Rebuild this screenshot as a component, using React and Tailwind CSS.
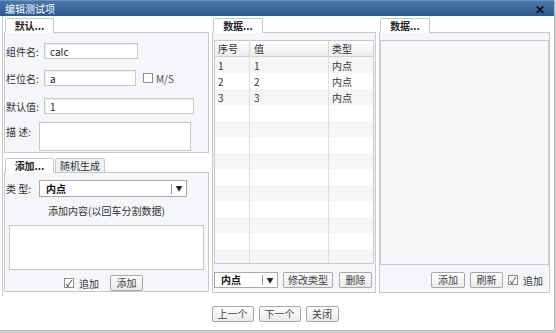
import React from 'react';

const Check = ({ checked }) => (
  <span className="inline-flex items-center justify-center w-[10px] h-[10px] border border-[#8e8e8e] bg-white text-[9px] leading-none text-[#222]">
    {checked ? '✓' : ''}
  </span>
);

const Btn = ({ children, className = '' }) => (
  <button className={`h-[16px] border border-[#a7a7a7] rounded-[2px] bg-gradient-to-b from-white to-[#e9e9e9] text-[10px] leading-none text-[#444] ${className}`}>
    {children}
  </button>
);

const Select = ({ className = '' }) => (
  <div className={`flex items-center bg-white border border-[#a9a9a9] ${className}`}>
    <span className="flex-1 pl-[6px] text-[10px] font-bold text-[#111] leading-none">内点</span>
    <span className="w-px h-[10px] bg-[#999]" />
    <span className="w-[14px] text-center text-[7px] text-[#222] leading-none">▼</span>
  </div>
);

const Tab = ({ children, active, className = '' }) => (
  <div
    className={`h-[15px] flex items-center justify-center border border-[#c5c9cf] rounded-t-[2px] text-[10px] leading-none ${
      active ? 'bg-white border-b-white font-bold text-[#222] -mb-px z-10' : 'bg-[#eef0f3] text-[#333] -mb-px'
    } ${className}`}
  >
    {children}
  </div>
);

const Input = ({ value, className = '' }) => (
  <div className={`h-[16px] bg-white border border-[#c7c7c7] shadow-[inset_1px_1px_0_#eee] flex items-center pl-[5px] text-[10px] text-[#222] ${className}`}>
    {value}
  </div>
);

const rows = [
  { no: '1', val: '1', type: '内点' },
  { no: '2', val: '2', type: '内点' },
  { no: '3', val: '3', type: '内点' },
];

export default function App() {
  const gridRows = Array.from({ length: 13 }, (_, i) => rows[i] || null);

  return (
    <div className="w-[556px] h-[333px] bg-[#cfcfcf] font-['Noto_Sans_CJK_SC',sans-serif] text-[#333]">
      <div className="w-[555px] h-[331px] bg-white border-r border-b border-[#b9b9b9] flex flex-col">
        {/* Title bar */}
        <div className="h-[16px] flex items-center justify-between px-[5px] bg-gradient-to-b from-[#4a77a8] to-[#2b5a8f] border-t border-[#6f93bb]">
          <span className="text-[10px] text-white leading-none">编辑测试项</span>
          <span className="text-[12px] font-bold text-[#111] leading-none mr-[4px]">✕</span>
        </div>

        <div className="flex flex-1 border-l border-[#c9c9c9] ml-[2px] pl-[1px] pr-[2px] pt-[2px]">
          {/* Left column */}
          <div className="w-[205px] flex flex-col">
            <div className="flex pl-[1px]">
              <Tab active className="w-[49px]">默认...</Tab>
            </div>
            <div className="h-[121px] border border-[#c5c9cf] bg-[#f4f6f9] px-[1px] pt-[10px] text-[10px]">
              <div className="flex items-center h-[16px]">
                <span className="w-[38px]">组件名:</span>
                <Input value="calc" className="w-[94px]" />
              </div>
              <div className="flex items-center h-[16px] mt-[11px]">
                <span className="w-[38px]">栏位名:</span>
                <Input value="a" className="w-[92px]" />
                <span className="ml-[7px] flex items-center gap-[3px]">
                  <Check />
                  <span className="text-[#555]">M/S</span>
                </span>
              </div>
              <div className="flex items-center h-[16px] mt-[12px]">
                <span className="w-[38px]">默认值:</span>
                <Input value="1" className="w-[150px]" />
              </div>
              <div className="flex mt-[8px]">
                <span className="w-[33px] pt-[2px]">描 述:</span>
                <div className="w-[152px] h-[29px] bg-white border border-[#c7c7c7]" />
              </div>
            </div>

            <div className="flex pl-[1px] mt-[5px]">
              <Tab active className="w-[49px]">添加...</Tab>
              <Tab className="w-[50px] ml-[1px]">随机生成</Tab>
            </div>
            <div className="h-[120px] border border-[#c5c9cf] bg-[#f4f6f9] px-[1px] pt-[7px] text-[10px]">
              <div className="flex items-center">
                <span className="w-[33px]">类 型:</span>
                <Select className="w-[148px] h-[17px]" />
              </div>
              <div className="text-center mt-[8px] leading-[12px]">添加内容(以回车分割数据)</div>
              <div className="mx-[3px] mt-[8px] h-[45px] bg-white border border-[#c7c7c7]" />
              <div className="flex items-center justify-center gap-[5px] mt-[5px] pr-[6px]">
                <Check checked />
                <span>追加</span>
                <Btn className="w-[33px] ml-[6px]">添加</Btn>
              </div>
            </div>
          </div>

          {/* Middle column */}
          <div className="w-[164px] ml-[3px] flex flex-col">
            <div className="flex pl-[1px]">
              <Tab active className="w-[50px]">数据...</Tab>
            </div>
            <div className="h-[261px] border border-[#c5c9cf] bg-[#f4f6f9] flex flex-col pt-[7px] px-px">
              <div className="h-[224px] border border-[#c9c9c9] bg-white overflow-hidden text-[10px]">
                <div className="flex h-[16px] bg-gradient-to-b from-white to-[#ececec] border-b border-[#d0d0d0]">
                  <div className="w-[35px] pl-[3px] flex items-center border-r border-[#d6d6d6]">序号</div>
                  <div className="w-[79px] pl-[4px] flex items-center border-r border-[#d6d6d6]">值</div>
                  <div className="flex-1 pl-[3px] flex items-center">类型</div>
                </div>
                {gridRows.map((r, i) => (
                  <div key={i} className={`flex h-[16px] ${i % 2 === 0 ? 'bg-[#f6f6f6]' : 'bg-white'}`}>
                    <div className="w-[35px] pl-[3px] flex items-center border-r border-[#dedede]">{r?.no}</div>
                    <div className="w-[79px] pl-[4px] flex items-center border-r border-[#dedede]">{r?.val}</div>
                    <div className="flex-1 pl-[3px] flex items-center">{r?.type}</div>
                  </div>
                ))}
              </div>
              <div className="flex items-center mt-[8px] gap-[5px]">
                <Select className="w-[64px] h-[16px]" />
                <Btn className="w-[50px]">修改类型</Btn>
                <Btn className="w-[33px] ml-px">删除</Btn>
              </div>
            </div>
          </div>

          {/* Right column */}
          <div className="w-[171px] ml-[3px] flex flex-col">
            <div className="flex pl-[1px]">
              <Tab active className="w-[50px]">数据...</Tab>
            </div>
            <div className="h-[261px] border border-[#c5c9cf] bg-[#f4f6f9] flex flex-col pt-[7px] px-0">
              <div className="h-[225px] border border-[#c9c9c9] bg-[#f5f7f9]" />
              <div className="flex items-center justify-end mt-[7px] pr-[6px] gap-[5px] text-[10px]">
                <Btn className="w-[34px]">添加</Btn>
                <Btn className="w-[33px]">刷新</Btn>
                <Check checked />
                <span>追加</span>
              </div>
            </div>
          </div>
        </div>

        {/* Footer buttons */}
        <div className="h-[34px] flex items-start justify-center gap-[5px] pt-[10px] pr-[4px]">
          <Btn className="w-[42px]">上一个</Btn>
          <Btn className="w-[42px]">下一个</Btn>
          <Btn className="w-[33px]">关闭</Btn>
        </div>
      </div>
    </div>
  );
}
